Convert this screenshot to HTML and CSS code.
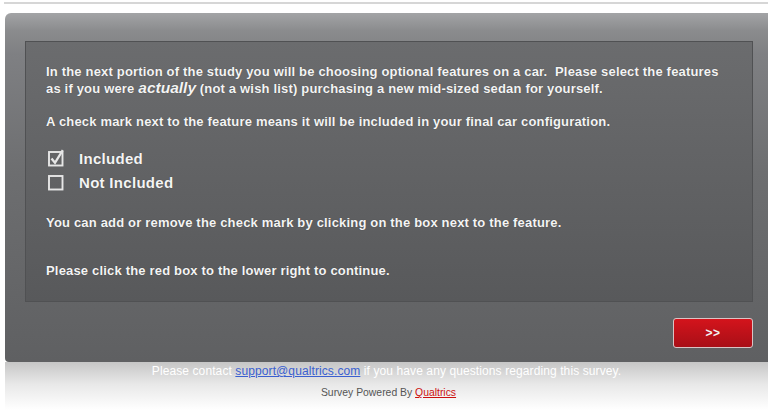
FILE: index.html
```html
<!DOCTYPE html>
<html>
<head>
<meta charset="utf-8">
<title>Survey</title>
<link rel="stylesheet" href="styles.css">
</head>
<body>
<div class="topline"></div>
<div class="panel">
  <div class="question">
    <p class="para intro">In the next portion of the study you will be choosing optional features on a car.&nbsp; Please select the features as if you were <em class="stress">actually</em> (not a wish list) purchasing a new mid-sized sedan for yourself.</p>
    <p class="para">A check mark next to the feature means it will be included in your final car configuration.</p>
    <div class="legend">
      <div class="legend-row">
        <svg class="box" width="20" height="18" viewBox="0 0 20 18" aria-hidden="true">
          <rect x="2" y="3" width="13.5" height="13.5" fill="none" stroke="#e6e6e6" stroke-width="1.9"/>
          <path d="M4.5 9.5 L8 13.8 L15.8 1.2" fill="none" stroke="#e6e6e6" stroke-width="2.3" stroke-linejoin="miter"/>
        </svg>
        <span class="label">Included</span>
      </div>
      <div class="legend-row">
        <svg class="box" width="20" height="18" viewBox="0 0 20 18" aria-hidden="true">
          <rect x="2" y="3" width="13.5" height="13.5" fill="none" stroke="#e6e6e6" stroke-width="1.9"/>
        </svg>
        <span class="label">Not Included</span>
      </div>
    </div>
    <p class="para gap">You can add or remove the check mark by clicking on the box next to the feature.</p>
    <p class="para gap2">Please click the red box to the lower right to continue.</p>
  </div>
  <div class="buttons">
    <button class="next" type="button">&gt;&gt;</button>
  </div>
</div>
<div class="footer">
  <p class="contact">Please contact <a href="#">support@qualtrics.com</a> if you have any questions regarding this survey.</p>
  <p class="powered">Survey Powered By <a href="#">Qualtrics</a></p>
</div>
</body>
</html>
```
FILE: styles.css
```css
html, body {
  margin: 0;
  padding: 0;
  background: #ffffff;
  overflow: hidden;
}

body {
  font-family: "Liberation Sans", Arial, sans-serif;
  width: 768px;
  height: 412px;
}

.topline {
  margin: 2px 0 0 4px;
  height: 2px;
  background: #d6d6d6;
}

.panel {
  margin: 9px 0 0 5px;
  padding: 28px 15px 14px 20px;
  border-radius: 6px 0 0 4px;
  background: linear-gradient(to bottom, #a3a4a6 0px, #8a8b8d 18px, #7f8083 40px, #6d6e70 160px, #5f6062 348px);
}

.question {
  height: 259px;
  border: 1px solid #505153;
  padding: 0 20px;
  background: linear-gradient(to bottom, #6b6c6e 0%, #58595b 100%);
  color: #f4f4f4;
  font-size: 13px;
  letter-spacing: 0.18px;
  font-weight: bold;
  text-shadow: 0 0 1px rgba(0, 0, 0, 0.4);
}

.para {
  margin: 0;
  line-height: 16px;
}

.intro {
  line-height: 17px;
  padding-top: 21px;
  margin-bottom: 17px;
}

.stress {
  font-size: 15.5px;
  line-height: 14px;
  letter-spacing: 0;
  font-style: italic;
}

.legend {
  margin-top: 16px;
}

.legend-row {
  display: flex;
  align-items: center;
  height: 24px;
}

.box {
  display: block;
  flex: none;
  margin: 0 12px 0 1px;
}

.label {
  font-size: 15px;
  letter-spacing: 0.3px;
}

.gap {
  margin-top: 21px;
}

.gap2 {
  margin-top: 32px;
}

.buttons {
  display: flex;
  justify-content: flex-end;
  margin-top: 16px;
}

.next {
  width: 80px;
  height: 30px;
  border: 1px solid #d9c4c5;
  border-radius: 3px;
  background: linear-gradient(to bottom, #d4141c 0%, #a80f17 100%);
  color: #f2f2f2;
  font-family: "Liberation Sans", Arial, sans-serif;
  font-size: 12px;
  font-weight: bold;
  letter-spacing: 0.5px;
  padding: 0;
}

.footer {
  margin-left: 5px;
  height: 50px;
  background: linear-gradient(to bottom, #c6c6c6 0px, #e8e8e8 22px, #ffffff 48px);
  text-align: center;
}

.contact {
  margin: 0;
  padding-top: 1px;
  font-size: 12px;
  letter-spacing: 0.1px;
  line-height: 16px;
  color: #ffffff;
}

.contact a {
  color: #3a5fd0;
}

.powered {
  margin: 8px 0 0;
  padding-left: 4px;
  font-size: 10.4px;
  line-height: 12px;
  color: #555555;
}

.powered a {
  color: #cc1111;
}
```
